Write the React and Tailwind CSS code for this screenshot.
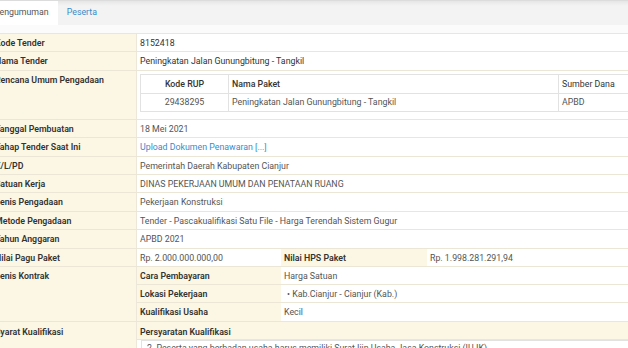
import React from 'react';

const rows = [
  ['Tanggal Pembuatan', '18 Mei 2021'],
  ['Tahap Tender Saat Ini', 'Upload Dokumen Penawaran [...]', true],
  ['K/L/PD', 'Pemerintah Daerah Kabupaten Cianjur'],
  ['Satuan Kerja', 'DINAS PEKERJAAN UMUM DAN PENATAAN RUANG'],
  ['Jenis Pengadaan', 'Pekerjaan Konstruksi'],
  ['Metode Pengadaan', 'Tender - Pascakualifikasi Satu File - Harga Terendah Sistem Gugur'],
  ['Tahun Anggaran', 'APBD 2021'],
];

function Row({ label, children, h = 'h-[18.4px]' }) {
  return (
    <div className={`flex ${h} border-b border-[#ebe6d6]`}>
      <div className="w-[146px] shrink-0 bg-[#fcf7e4] pl-1 pt-[4px] font-semibold text-[#333] border-r border-[#ece7d8]">
        {label}
      </div>
      <div className="flex-1 bg-white pl-[3px] pt-[4px] text-[#555]">{children}</div>
    </div>
  );
}

function Plain({ label, value, link }) {
  return (
    <Row label={label}>
      <span className={link ? 'text-[#3a8bc9]' : ''}>{value}</span>
    </Row>
  );
}

export default function App() {
  return (
    <div
      className="w-[628px] h-[348px] overflow-hidden bg-white text-[8.8px] leading-[11px]"
      style={{ fontFamily: 'Roboto, "Liberation Sans", sans-serif' }}
    >
      <div className="flex h-[25px] bg-gradient-to-b from-[#e6e6e6] to-[#f3f3f3] to-[20%] border-t border-[#dcdcdc]">
        <div className="-ml-[15px] bg-white pl-[9px] pr-[9px] pt-[6px] text-[#555]">Pengumuman</div>
        <div className="pl-[9px] pt-[6px] text-[#3a8bc9]">Peserta</div>
      </div>
      <div className="h-[8px] bg-[#fbfbfb]" />
      <div className="-ml-[9px] border-t border-[#ebe6d6]">
        <Row label="Kode Tender">
          <span className="text-[#333]">8152418</span>
        </Row>
        <Row label="Nama Tender">
          <span className="text-[#333]">Peningkatan Jalan Gunungbitung - Tangkil</span>
        </Row>
        <div className="flex h-[49px] border-b border-[#ebe6d6]">
          <div className="w-[146px] shrink-0 bg-[#fcf7e4] pl-1 pt-[4px] font-semibold text-[#333] border-r border-[#ece7d8]">
            Rencana Umum Pengadaan
          </div>
          <div className="flex-1 bg-white pl-[3px] pt-[3px]">
            <div className="border border-r-0 border-[#e2e2e2] text-[#555]">
              <div className="flex h-[19px] border-b border-[#e2e2e2] text-[#333]">
                <div className="w-[87px] pt-[4px] text-center font-medium">Kode RUP</div>
                <div className="w-[330px] border-l border-[#e2e2e2] pl-[3px] pt-[4px] font-medium">Nama Paket</div>
                <div className="flex-1 border-l border-[#e2e2e2] pl-[3px] pt-[4px]">Sumber Dana</div>
              </div>
              <div className="flex h-[17px]">
                <div className="w-[87px] pt-[3px] text-center">29438295</div>
                <div className="w-[330px] border-l border-[#e2e2e2] pl-[3px] pt-[3px]">Peningkatan Jalan Gunungbitung - Tangkil</div>
                <div className="flex-1 border-l border-[#e2e2e2] pl-[3px] pt-[3px]">APBD</div>
              </div>
            </div>
          </div>
        </div>
        {rows.map(([l, v, link]) => (
          <Plain key={l} label={l} value={v} link={link} />
        ))}
        <div className="flex h-[18.4px] border-b border-[#ebe6d6]">
          <div className="w-[146px] shrink-0 bg-[#fcf7e4] pl-1 pt-[4px] font-semibold text-[#333] border-r border-[#ece7d8]">
            Nilai Pagu Paket
          </div>
          <div className="w-[144px] bg-white pl-[3px] pt-[4px] text-[#555]">Rp. 2.000.000.000,00</div>
          <div className="w-[146px] bg-[#fcf7e4] pl-[3px] pt-[4px] font-semibold text-[#333]">Nilai HPS Paket</div>
          <div className="flex-1 bg-white pl-[3px] pt-[4px] text-[#555]">Rp. 1.998.281.291,94</div>
        </div>
        <div className="flex border-b border-[#ebe6d6]">
          <div className="w-[146px] shrink-0 bg-[#fcf7e4] pl-1 pt-[4px] font-semibold text-[#333] border-r border-[#ece7d8]">
            Jenis Kontrak
          </div>
          <div className="flex-1">
            {[
              ['Cara Pembayaran', 'Harga Satuan'],
              ['Lokasi Pekerjaan', '• Kab.Cianjur - Cianjur (Kab.)'],
              ['Kualifikasi Usaha', 'Kecil'],
            ].map(([l, v], i) => (
              <div key={l} className={`flex h-[18.2px] ${i < 2 ? 'border-b border-[#ebe6d6]' : ''}`}>
                <div className="w-[144px] bg-[#fcf7e4] pl-[3px] pt-[4px] font-semibold text-[#333]">{l}</div>
                <div className={`flex-1 bg-white pt-[4px] text-[#555] ${i === 1 ? 'pl-[6px]' : 'pl-[3px]'}`}>{v}</div>
              </div>
            ))}
          </div>
        </div>
        <div className="flex h-[60px]">
          <div className="w-[146px] shrink-0 bg-[#fcf7e4] pl-1 pt-[5px] font-semibold text-[#333] border-r border-[#ece7d8]">
            Syarat Kualifikasi
          </div>
          <div className="flex-1 bg-white">
            <div className="h-[18px] bg-[#fcf7e4] pl-[3px] pt-[5px] font-semibold text-[#333] border-b border-[#ebe6d6]">
              Persyaratan Kualifikasi
            </div>
            <div className="ml-[4px] border border-r-0 border-[#e2e2e2] pl-[5px] pt-[2px] h-[30px] text-[#555]">
              2. Peserta yang berbadan usaha harus memiliki Surat Ijin Usaha Jasa Konstruksi (IUJK)
            </div>
          </div>
        </div>
      </div>
    </div>
  );
}
